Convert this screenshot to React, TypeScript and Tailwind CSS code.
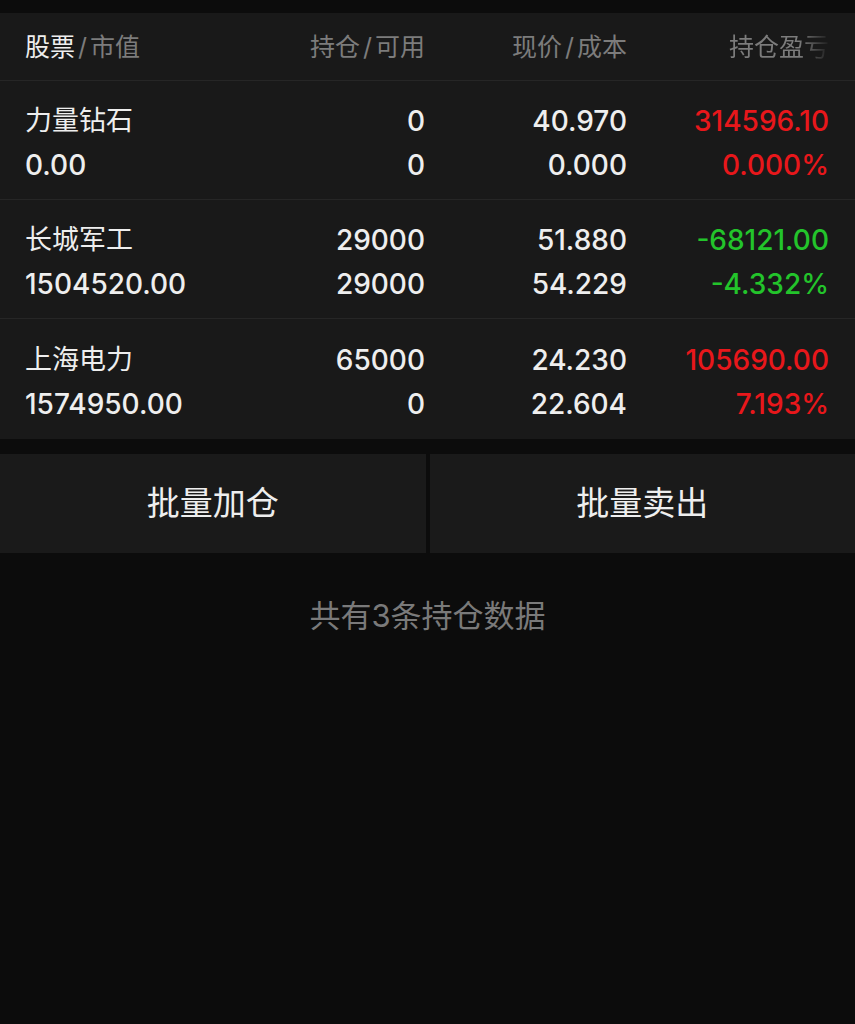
import React from "react";

interface Holding {
  name: string;
  value: string;
  hold: string;
  avail: string;
  price: string;
  cost: string;
  profit: string;
  ratio: string;
  up: boolean;
}

const holdings: Holding[] = [
  { name: "力量钻石", value: "0.00", hold: "0", avail: "0", price: "40.970", cost: "0.000", profit: "314596.10", ratio: "0.000%", up: true },
  { name: "长城军工", value: "1504520.00", hold: "29000", avail: "29000", price: "51.880", cost: "54.229", profit: "-68121.00", ratio: "-4.332%", up: false },
  { name: "上海电力", value: "1574950.00", hold: "65000", avail: "0", price: "24.230", cost: "22.604", profit: "105690.00", ratio: "7.193%", up: true },
];

const font = { fontFamily: 'Inter, "Noto Sans CJK SC", "Noto Sans", sans-serif' };

const App: React.FC = () => {
  return (
    <div className="min-h-screen w-[855px] bg-[#0c0c0c] pt-[13px]" style={font}>
      <div className="bg-[#191919]">
        {/* Header */}
        <div className="grid grid-cols-[200px_200px_202px_202px] pl-[25px] pr-[26px] pt-[2px] h-[68px] items-center border-b border-[#262626] text-[25px] text-[#7c7c7c]">
          <div>
            <span className="text-[#eeeeee]">股票</span>
            <span className="mx-[3px]">/</span>市值
          </div>
          <div className="text-right">
            持仓<span className="mx-[3px]">/</span>可用
          </div>
          <div className="text-right">
            现价<span className="mx-[3px]">/</span>成本
          </div>
          <div className="text-right">
            <span className="bg-linear-to-r from-[#7c7c7c] from-70% to-[#7c7c7c]/5 bg-clip-text text-transparent">持仓盈亏</span>
          </div>
        </div>

        {/* Rows */}
        {holdings.map((h, i) => (
          <div
            key={h.name}
            className={`grid grid-cols-[200px_200px_202px_202px] pl-[25px] pr-[26px] pt-[6px] content-center text-[28px] font-medium leading-[44px] text-[#eeeeee] ${
              i < holdings.length - 1 ? "h-[119px] border-b border-[#262626]" : "h-[120px]"
            }`}
          >
            <div className="flex flex-col">
              <span className="text-[27px] font-normal">{h.name}</span>
              <span>{h.value}</span>
            </div>
            <div className="flex flex-col text-right">
              <span>{h.hold}</span>
              <span>{h.avail}</span>
            </div>
            <div className="flex flex-col text-right">
              <span>{h.price}</span>
              <span>{h.cost}</span>
            </div>
            <div className={`flex flex-col text-right ${h.up ? "text-[#e8171b]" : "text-[#23c42b]"}`}>
              <span>{h.profit}</span>
              <span>{h.ratio}</span>
            </div>
          </div>
        ))}
      </div>

      {/* Batch buttons */}
      <div className="mt-[15px] flex gap-[4px]">
        <button className="flex-1 h-[99px] bg-[#1a1a1a] text-[33px] text-[#eeeeee]">批量加仓</button>
        <button className="flex-1 h-[99px] bg-[#1a1a1a] text-[33px] text-[#eeeeee]">批量卖出</button>
      </div>

      <div className="mt-[40px] text-center text-[31px] text-[#7a7a7a]">共有3条持仓数据</div>
    </div>
  );
};

export default App;
